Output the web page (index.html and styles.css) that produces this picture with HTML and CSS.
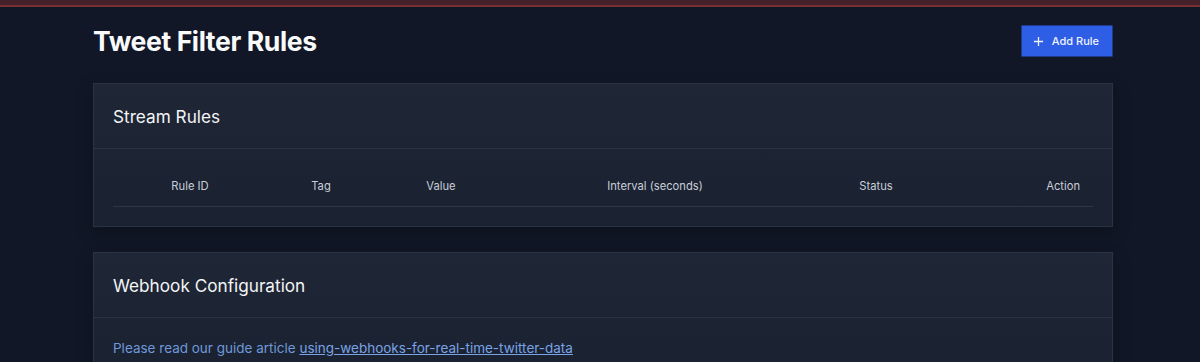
FILE: index.html
```html
<!DOCTYPE html>
<html lang="en">
<head>
  <meta charset="UTF-8" />
  <meta name="viewport" content="width=device-width, initial-scale=1.0" />
  <title>Tweet Filter Rules</title>
  <link rel="stylesheet" href="styles.css">
</head>
<body>
  <div class="top-bar"></div>

  <main class="container">
    <!-- Page header -->
    <div class="page-head">
      <h1>Tweet Filter Rules</h1>
      <button class="add-btn">
        <svg width="11" height="11" viewBox="0 0 12 12" fill="none" stroke="currentColor" stroke-width="1.4">
          <path d="M6 1v10M1 6h10" />
        </svg>
        Add Rule
      </button>
    </div>

    <!-- Stream rules -->
    <section class="card">
      <div class="card-head">
        <h2>Stream Rules</h2>
      </div>
      <div class="card-body">
        <table class="rules">
          <thead>
            <tr>
              <th class="c-id">Rule ID</th>
              <th class="c-tag">Tag</th>
              <th class="c-value">Value</th>
              <th class="c-interval">Interval (seconds)</th>
              <th class="c-status">Status</th>
              <th class="c-action">Action</th>
            </tr>
          </thead>
          <tbody></tbody>
        </table>
      </div>
    </section>

    <!-- Webhook -->
    <section class="card">
      <div class="card-head">
        <h2>Webhook Configuration</h2>
      </div>
      <div class="card-body">
        <p class="guide">Please read our guide article <a href="#">using-webhooks-for-real-time-twitter-data</a></p>
      </div>
    </section>
  </main>
</body>
</html>
```

FILE: styles.css
```css
/* General */
body {
  margin: 0;
  background-color: #111726;
  color: #f3f4f6;
  font-family: Inter, "Noto Sans", sans-serif;
}

.top-bar {
  height: 5px;
  background-color: #44202a;
  border-bottom: 2px solid #7a2f33;
}

.container {
  width: 1020px;
  margin: 0 87px 0 93px;
}

/* Header */
.page-head {
  display: flex;
  justify-content: space-between;
  align-items: center;
  padding-top: 18px;
  height: 32px;
  margin-bottom: 26px;
}

.page-head h1 {
  margin: 0;
  font-size: 26.6px;
  font-weight: 700;
  letter-spacing: -0.4px;
  color: #f9fafb;
}

.add-btn {
  display: flex;
  align-items: center;
  gap: 8px;
  height: 32px;
  padding: 0 13px 0 11px;
  background-color: #2f5ee6;
  color: #eef2ff;
  border: 1px solid #1e3a8a;
  border-radius: 1px;
  font-family: inherit;
  font-size: 11px;
  font-weight: 500;
  cursor: pointer;
}

/* Cards */
.card {
  background: linear-gradient(180deg, #1f2636 0%, #1a2130 100%);
  border: 1px solid #2b3343;
  box-shadow: 0 6px 16px rgba(0, 0, 0, 0.25);
  margin-bottom: 25px;
}

.card-head {
  padding: 19px 19px 17px;
  border-bottom: 1px solid #2b3343;
}

.card-head h2 {
  margin: 0;
  font-size: 17.2px;
  line-height: 28px;
  font-weight: 400;
  color: #f3f4f6;
}

.card-body {
  padding: 16px 19px 19px;
}

/* Table */
.rules {
  width: 980px;
  border-collapse: collapse;
  table-layout: fixed;
}

.rules th {
  padding: 12px 0 11px;
  font-size: 11.2px;
  font-weight: 400;
  line-height: 18px;
  color: #c9ced8;
  text-align: center;
  border-bottom: 1px solid #2e3646;
}

.c-id { width: 154px; }
.c-tag { width: 108px; }
.c-value { width: 132px; }
.c-interval { width: 296px; }
.c-status { width: 146px; }
.rules th.c-action {
  text-align: right;
  padding-right: 13px;
}

.guide {
  margin: 4px 0 0;
  font-size: 13.5px;
  line-height: 20px;
  color: #6f98db;
}

.guide a {
  color: #7aa3e6;
  text-decoration: underline;
}
```
